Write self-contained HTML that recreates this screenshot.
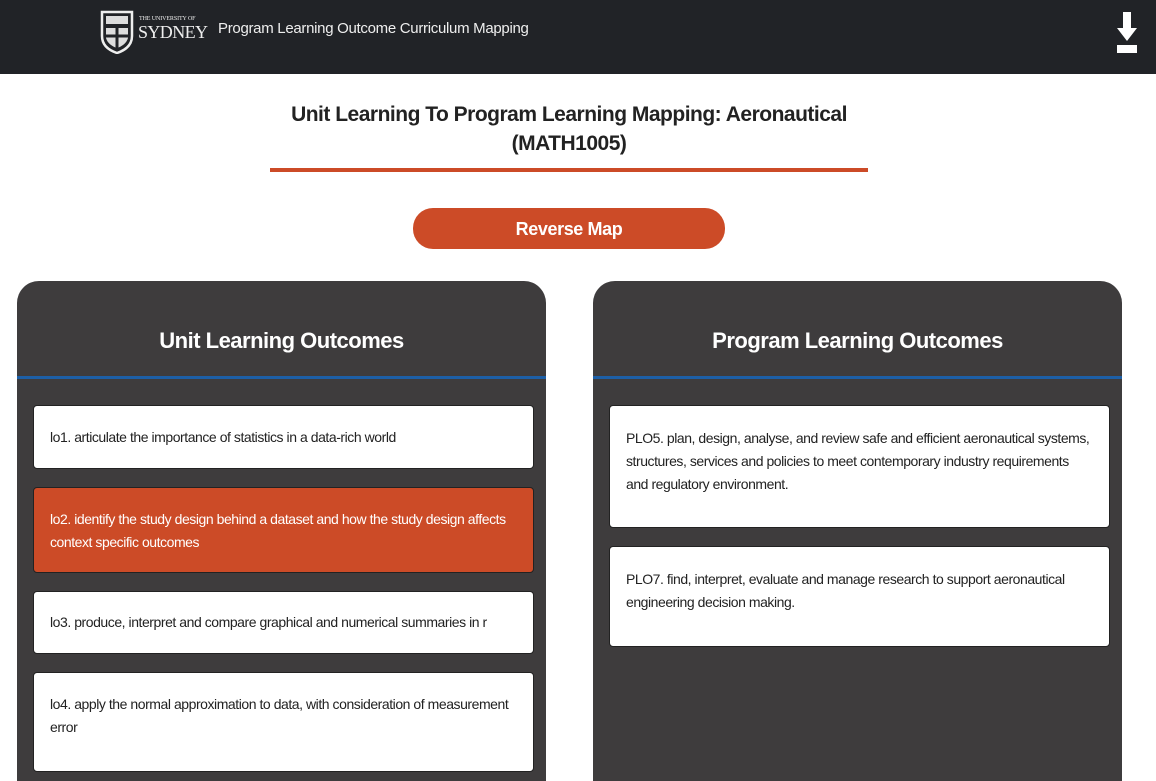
<!DOCTYPE html>
<html><head><meta charset="utf-8"><style>
*{box-sizing:border-box;margin:0;padding:0}
body{width:1156px;height:750px;overflow:hidden;background:#fff;font-family:"Liberation Sans",sans-serif;position:relative}
.hdr{position:absolute;left:0;top:0;width:1156px;height:74px;background:#212327}
.hdr .t{position:absolute;left:218px;top:20px;color:#eee;font-size:15px;letter-spacing:-0.3px;white-space:nowrap}
.title{position:absolute;left:220px;width:698px;top:100px;text-align:center;font-size:21px;font-weight:bold;color:#222;line-height:29px;letter-spacing:-0.5px}
.line{position:absolute;left:270px;top:168px;width:598px;height:4px;background:#cc4b27}
.btn{position:absolute;left:413px;top:208px;width:312px;height:41px;border-radius:20px;background:#cc4b27;color:#fff;font-weight:bold;font-size:18px;text-align:center;line-height:43px;letter-spacing:-0.4px}
.panel{position:absolute;top:281px;width:529px;height:500px;background:#3e3c3d;border-radius:22px 22px 0 0}
.panel h2{position:absolute;top:0;left:0;width:100%;height:96px;line-height:120px;text-align:center;color:#fff;font-size:22px;letter-spacing:-0.5px}
.panel .bl{position:absolute;top:95px;left:0;width:100%;height:3px;background:#1d5fa6}
.it{position:absolute;left:16px;width:501px;background:#fff;border:1.5px solid #222;border-radius:4px;font-size:14px;line-height:23px;color:#222;padding:0 16px;letter-spacing:-0.45px}
.it.o{background:#cc4b27;color:#fff}
</style></head><body>
<div class="hdr">
<svg style="position:absolute;left:100px;top:10px" width="34" height="44" viewBox="0 0 34 44"><path d="M2 2H32V26Q32 38 17 43Q2 38 2 26Z" fill="none" stroke="#eee" stroke-width="2.5"/><path d="M6 6H28V14H6Z" fill="#ddd"/><path d="M6 18H28V28Q26 35 17 38Q8 35 6 28Z" fill="#ddd"/><path d="M17 18V38M6 26H28" stroke="#212327" stroke-width="3"/></svg>
<div style="position:absolute;left:139px;top:16px;color:#eee;font-family:'Liberation Serif',serif;font-size:6px;letter-spacing:-0.1px">THE UNIVERSITY OF</div>
<div style="position:absolute;left:138px;top:22px;color:#eee;font-family:'Liberation Serif',serif;font-size:18px;letter-spacing:-0.6px">SYDNEY</div>
<div class="t">Program Learning Outcome Curriculum Mapping</div>
<svg style="position:absolute;left:1116px;top:12px" width="22" height="42" viewBox="0 0 22 42"><path d="M7 0H15V16H21L11 29L1 16H7Z" fill="#fff"/><rect x="1" y="33" width="20" height="8" fill="#fff"/></svg>
</div>
<div class="title">Unit Learning To Program Learning Mapping: Aeronautical<br>(MATH1005)</div>
<div class="line"></div>
<div class="btn">Reverse Map</div>
<div class="panel" style="left:17px"><h2>Unit Learning Outcomes</h2><div class="bl"></div>
<div class="it" style="top:124px;height:64px;padding-top:20px">lo1. articulate the importance of statistics in a data-rich world</div>
<div class="it o" style="top:206px;height:86px;padding-top:20px">lo2. identify the study design behind a dataset and how the study design affects context specific outcomes</div>
<div class="it" style="top:310px;height:63px;padding-top:19px">lo3. produce, interpret and compare graphical and numerical summaries in r</div>
<div class="it" style="top:391px;height:100px;padding-top:20px">lo4. apply the normal approximation to data, with consideration of measurement error</div>
</div>
<div class="panel" style="left:593px"><h2>Program Learning Outcomes</h2><div class="bl"></div>
<div class="it" style="top:124px;height:123px;padding-top:21px">PLO5. plan, design, analyse, and review safe and efficient aeronautical systems, structures, services and policies to meet contemporary industry requirements and regulatory environment.</div>
<div class="it" style="top:265px;height:101px;padding-top:21px">PLO7. find, interpret, evaluate and manage research to support aeronautical engineering decision making.</div>
</div>
</body></html>
